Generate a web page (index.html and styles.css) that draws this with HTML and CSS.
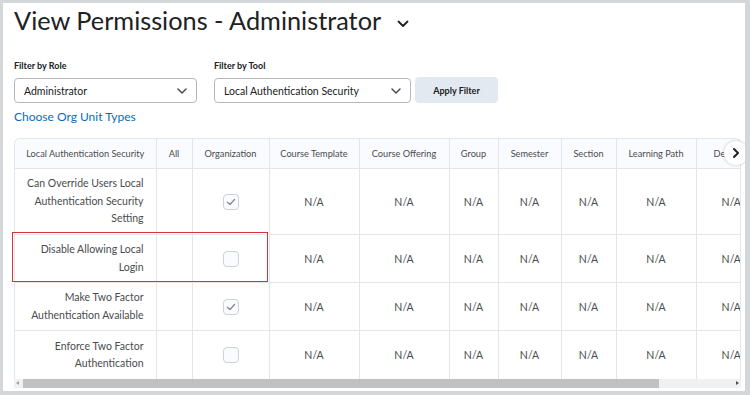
FILE: index.html
```html
<!DOCTYPE html>
<html>
<head>
<meta charset="utf-8">
<link rel="stylesheet" href="styles.css">
</head>
<body>
<div class="frame">
  <div class="title-row">
    <h1 class="title">View Permissions - Administrator</h1>
    <svg class="title-chev" width="12" height="8" viewBox="0 0 12 8"><path d="M1.5 1.5 L6 6 L10.5 1.5" fill="none" stroke="#202122" stroke-width="1.8" stroke-linecap="round" stroke-linejoin="round"/></svg>
  </div>
  <div class="filters">
    <div class="field">
      <label class="field-label">Filter by Role</label>
      <div class="select select-role"><span>Administrator</span>
        <svg width="10" height="6" viewBox="0 0 10 6"><path d="M1 1 L5 5 L9 1" fill="none" stroke="#494c4e" stroke-width="1.5" stroke-linecap="round" stroke-linejoin="round"/></svg>
      </div>
    </div>
    <div class="field">
      <label class="field-label">Filter by Tool</label>
      <div class="select select-tool"><span>Local Authentication Security</span>
        <svg width="10" height="6" viewBox="0 0 10 6"><path d="M1 1 L5 5 L9 1" fill="none" stroke="#494c4e" stroke-width="1.5" stroke-linecap="round" stroke-linejoin="round"/></svg>
      </div>
    </div>
    <button class="apply">Apply Filter</button>
  </div>
  <a class="link">Choose Org Unit Types</a>
  <div class="table-wrap">
    <div class="table-clip">
      <table class="perm">
        <colgroup>
          <col style="width:141px"><col style="width:36px"><col style="width:77px"><col style="width:90px"><col style="width:90px"><col style="width:49px"><col style="width:63px"><col style="width:55px"><col style="width:80px"><col style="width:70px">
        </colgroup>
        <thead>
          <tr><th>Local Authentication Security</th><th>All</th><th>Organization</th><th>Course Template</th><th>Course Offering</th><th>Group</th><th>Semester</th><th>Section</th><th>Learning Path</th><th class="dept">Department</th></tr>
        </thead>
        <tbody>
          <tr class="r3"><td class="label">Can Override Users Local Authentication Security Setting</td><td></td><td><span class="cb checked"><svg width="10" height="8" viewBox="0 0 10 8"><path d="M1.5 4.2 L4 6.5 L8.5 1.5" fill="none" stroke="#8a8d90" stroke-width="1.4" stroke-linecap="round" stroke-linejoin="round"/></svg></span></td><td>N/A</td><td>N/A</td><td>N/A</td><td>N/A</td><td>N/A</td><td>N/A</td><td class="last">N/A</td></tr>
          <tr class="r2"><td class="label">Disable Allowing Local Login</td><td></td><td><span class="cb"></span></td><td>N/A</td><td>N/A</td><td>N/A</td><td>N/A</td><td>N/A</td><td>N/A</td><td class="last">N/A</td></tr>
          <tr class="r2"><td class="label">Make Two Factor Authentication Available</td><td></td><td><span class="cb checked"><svg width="10" height="8" viewBox="0 0 10 8"><path d="M1.5 4.2 L4 6.5 L8.5 1.5" fill="none" stroke="#8a8d90" stroke-width="1.4" stroke-linecap="round" stroke-linejoin="round"/></svg></span></td><td>N/A</td><td>N/A</td><td>N/A</td><td>N/A</td><td>N/A</td><td>N/A</td><td class="last">N/A</td></tr>
          <tr class="r2 lastrow"><td class="label">Enforce Two Factor Authentication</td><td></td><td><span class="cb"></span></td><td>N/A</td><td>N/A</td><td>N/A</td><td>N/A</td><td>N/A</td><td>N/A</td><td class="last">N/A</td></tr>
        </tbody>
      </table>
    </div>
    <div class="scrollbar">
      <span class="sb-arrow left"></span>
      <div class="sb-track"><div class="sb-thumb"></div></div>
      <span class="sb-arrow right"></span>
    </div>
    <div class="highlight"></div>
    <div class="scroll-btn">
      <svg width="10" height="12" viewBox="0 0 10 12"><path d="M3 2 L7 6 L3 10" fill="none" stroke="#202122" stroke-width="2" stroke-linecap="round" stroke-linejoin="round"/></svg>
    </div>
  </div>
</div>
</body>
</html>
```

FILE: styles.css
```css
html, body {
  margin: 0;
  padding: 0;
  background: #ffffff;
}
body {
  font-family: Lato, "Open Sans", "Liberation Sans", sans-serif;
  color: #494c4e;
}
.frame {
  width: 750px;
  height: 395px;
  box-sizing: border-box;
  border-left: 3px solid #d4d7da;
  border-top: 3px solid #d4d7da;
  border-right: 5px solid #d4d7da;
  border-bottom: 4px solid #d4d7da;
  padding: 0 0 0 11px;
  overflow: hidden;
  position: relative;
}
.title-row {
  display: flex;
  align-items: center;
  height: 34px;
}
.title {
  margin: 0;
  font-weight: 400;
  font-size: 25.3px;
  color: #202122;
  line-height: 34px;
  letter-spacing: 0;
}
.title-chev {
  margin-left: 16px;
  margin-top: 8px;
}
.filters {
  display: flex;
  align-items: flex-end;
  gap: 17px;
  margin-top: 22px;
}
.field {
  display: flex;
  flex-direction: column;
}
.field-label {
  font-size: 9px;
  font-weight: 700;
  color: #202122;
  line-height: 14px;
  margin-bottom: 5px;
}
.select {
  box-sizing: border-box;
  height: 25px;
  border: 1px solid #b5b8bb;
  border-radius: 4px;
  display: flex;
  align-items: center;
  justify-content: space-between;
  padding: 0 9px 0 9px;
  font-size: 10.5px;
  color: #202122;
}
.select-role { width: 183px; }
.select-tool { width: 197px; }
.apply {
  margin-left: -13px;
  width: 83px;
  height: 26px;
  border: none;
  border-radius: 4px;
  background: #e3e9f1;
  font-family: inherit;
  font-size: 9px;
  font-weight: 700;
  color: #202122;
  padding: 0;
}
.link {
  display: block;
  margin-top: 6px;
  font-size: 12px;
  color: #006fbf;
  line-height: 16px;
}
.table-wrap {
  position: relative;
  margin-top: 13px;
  width: 727px;
  border: 1px solid #e3e6e9;
  border-bottom: none;
  border-radius: 6px 6px 0 0;
  box-sizing: border-box;
}
.table-clip {
  overflow: hidden;
  border-radius: 6px 6px 0 0;
}
.perm {
  border-collapse: collapse;
  table-layout: fixed;
  width: 751px;
}
.perm th {
  height: 29px;
  padding: 0;
  font-weight: 400;
  font-size: 9.2px;
  color: #494c4e;
  background: #f9fbff;
  border-right: 1px solid #e3e6e9;
  border-bottom: 1px solid #e3e6e9;
  white-space: nowrap;
  text-align: center;
}
.perm th.dept {
  text-align: left;
  padding-left: 17px;
}
.perm td {
  padding: 0;
  text-align: center;
  border-right: 1px solid #e3e6e9;
  border-bottom: 1px solid #e3e6e9;
  font-size: 10.5px;
  color: #494c4e;
}
.perm td.last { border-right: none; }
.perm td.label {
  text-align: right;
  padding: 0 12px 0 10px;
  line-height: 17.5px;
  font-size: 10.5px;
}
.perm tr.r3 td { height: 65px; }
.perm tr.r2 td { height: 47px; }
.perm tr.lastrow td { height: 48px; border-bottom: none; }
.cb {
  display: inline-flex;
  align-items: center;
  justify-content: center;
  box-sizing: border-box;
  width: 16px;
  height: 16px;
  border: 1px solid #cdd1d5;
  border-radius: 4px;
  background: #f9fbff;
  vertical-align: middle;
}
.scrollbar {
  display: flex;
  align-items: center;
  height: 9px;
  background: #f1f1f1;
  margin: 0 -1px;
}
.sb-arrow {
  width: 9px;
  height: 9px;
  position: relative;
}
.sb-arrow.left::after {
  content: "";
  position: absolute;
  left: 2px;
  top: 2px;
  border-right: 3px solid #a3a3a3;
  border-top: 2.5px solid transparent;
  border-bottom: 2.5px solid transparent;
}
.sb-arrow.right::after {
  content: "";
  position: absolute;
  left: 4px;
  top: 2px;
  border-left: 3px solid #505050;
  border-top: 2.5px solid transparent;
  border-bottom: 2.5px solid transparent;
}
.sb-track {
  flex: 1;
  height: 9px;
}
.sb-thumb {
  width: 636px;
  height: 9px;
  background: #c1c1c1;
}
.highlight {
  position: absolute;
  left: -3px;
  top: 93px;
  width: 256px;
  height: 50px;
  box-sizing: border-box;
  border: 1.5px solid #d4343b;
}
.scroll-btn {
  position: absolute;
  right: -8px;
  top: 2px;
  width: 24px;
  height: 24px;
  border-radius: 50%;
  background: #ffffff;
  box-shadow: 0 0 3px rgba(0,0,0,0.25);
  display: flex;
  align-items: center;
  justify-content: center;
}
```
